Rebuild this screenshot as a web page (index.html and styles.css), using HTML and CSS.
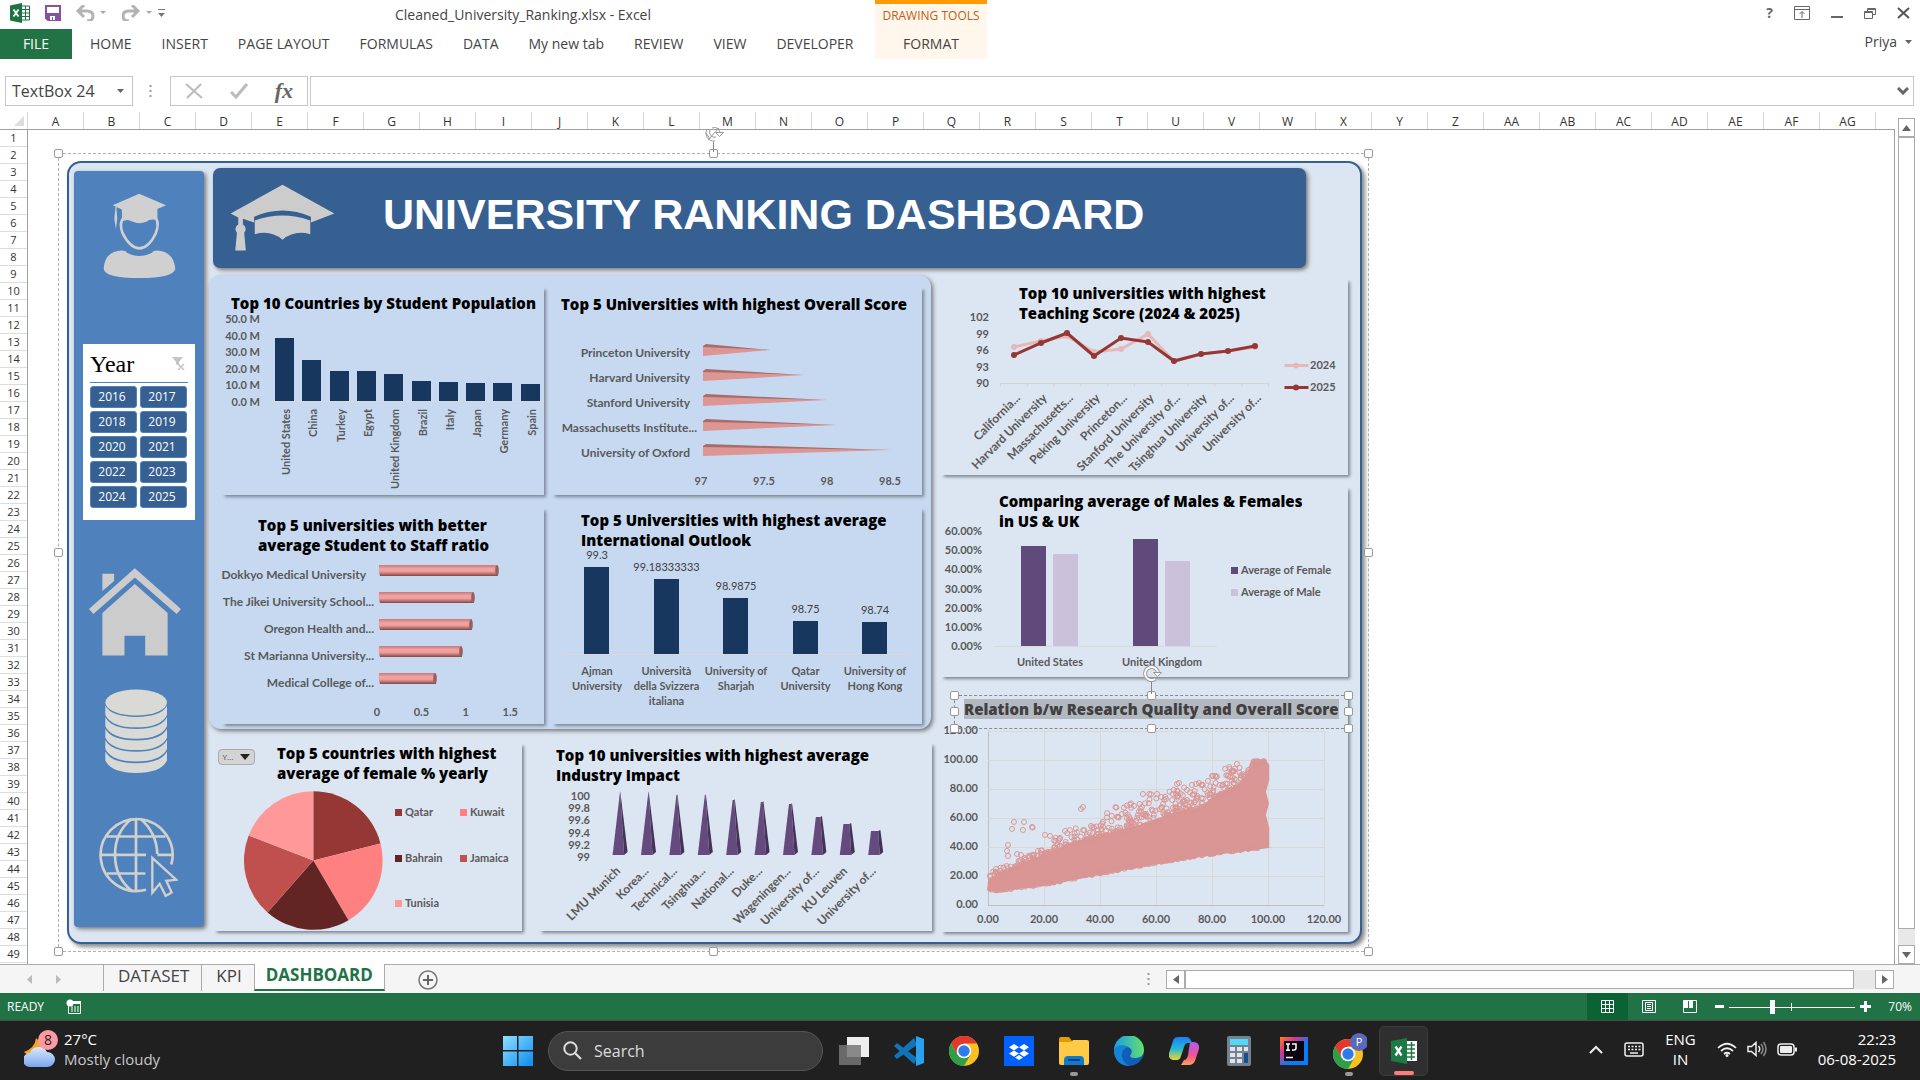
FILE: index.html
```html
<!DOCTYPE html>
<html lang="en">
<head>
<meta charset="utf-8">
<title>Cleaned_University_Ranking.xlsx - Excel</title>
<link rel="stylesheet" href="styles.css">
</head>
<body>
<header class="ribbon">
  <div class="quick">
    <svg width="20" height="20" viewBox="0 0 20 20"><path fill="#1f7244" d="M0 2.500 12 0v20L0 17.500z"/><path fill="none" stroke="#1f7244" d="M12 3h7.500v14H12M12 6.500h7M12 10h7M12 13.500h7M15.500 3v14"/><path stroke="#fff" stroke-width="1.800" d="m3.500 6.500 5 7m0-7-5 7"/></svg>
    <svg width="16" height="16" viewBox="0 0 16 16"><path fill="none" stroke="#8451a5" stroke-width="2" d="M1 1h14v14H3l-2-2z"/><path fill="#8451a5" d="M2 8h12v7H2z"/><path fill="#fff" d="M5 11h5v4H8v-3H7v3H5z"/></svg>
    <svg class="undo" width="31" height="16" viewBox="0 0 31 16"><path fill="none" stroke="#b3b3b3" stroke-width="3" d="M2 6h9q6 0 6 5t-6 5M8 0 2 6l6 6"/><path fill="#aaa" d="M24 6h6l-3 3z"/></svg>
    <svg width="31" height="16" viewBox="0 0 31 16"><path fill="none" stroke="#b3b3b3" stroke-width="3" d="M16 6H7q-6 0-6 5t6 5M10 0l6 6-6 6"/><path fill="#aaa" d="M24 6h6l-3 3z"/></svg>
    <svg width="7" height="8" viewBox="0 0 7 8"><path fill="#777" d="M0 0h7v1H0zM0 4h7L3.500 8z"/></svg>
  </div>
  <div class="doc-name">Cleaned_University_Ranking.xlsx - Excel</div>
  <div class="window-buttons">
    <button aria-label="Help"><b>?</b></button>
    <button aria-label="Ribbon options"><svg width="16" height="14" viewBox="0 0 16 14"><path fill="none" stroke="#666" d="M.5.5h15v13H.5zM.5 3.500h15M8 12V6M5.500 8 8 5.500 10.500 8"/></svg></button>
    <button aria-label="Minimize"><svg width="12" height="12"><path fill="#666" d="M0 9h12v2H0z"/></svg></button>
    <button aria-label="Restore"><svg width="12" height="12" viewBox="0 0 12 12"><path fill="none" stroke="#666" d="M.5 4.500h8v7h-8zM3.500 4V1.500h8v6H9M.5 5.500h8M3.500 2.500h8"/></svg></button>
    <button aria-label="Close"><svg width="13" height="12" viewBox="0 0 13 12"><path fill="none" stroke="#555" stroke-width="2" d="m1 1 11 10M12 1 1 11"/></svg></button>
  </div>
  <nav class="tabs">
    <button class="file">FILE</button><button>HOME</button><button>INSERT</button><button>PAGE LAYOUT</button><button>FORMULAS</button><button>DATA</button><button>My new tab</button><button>REVIEW</button><button>VIEW</button><button>DEVELOPER</button>
  </nav>
  <div class="context"><span>DRAWING TOOLS</span><button>FORMAT</button></div>
  <button class="user">Priya <svg width="7" height="4"><path fill="#666" d="M0 0h7L3.500 4z"/></svg></button>
</header>

<section class="formula">
  <div class="name-box"><input aria-label="Name box" value="TextBox 24"><svg width="7" height="4"><path fill="#666" d="M0 0h7L3.500 4z"/></svg></div>
  <svg class="grip" width="3" height="13"><path stroke="#999" stroke-width="2" stroke-dasharray="2 3" d="M1.500 0v13"/></svg>
  <div class="fx">
    <svg width="18" height="16" viewBox="0 0 18 16"><path stroke="#bbb" stroke-width="2" d="m1 1 16 14M16 1 2 15"/></svg>
    <svg width="18" height="16" viewBox="0 0 18 16"><path fill="none" stroke="#bbb" stroke-width="3" d="m1 9 5 5L17 1"/></svg>
    <i>fx</i>
  </div>
  <div class="formula-input"><input aria-label="Formula"><svg width="12" height="8" viewBox="0 0 12 8"><path fill="none" stroke="#666" stroke-width="3" d="m1 1 5 5 5-5"/></svg></div>
</section>

<main class="workspace">
  <div class="sheet">
    <div class="cols" id="cols"><span class="corner"><svg width="10" height="10"><path fill="#ddd" d="M10 0v10H0z"/></svg></span></div>
    <div class="grid">
      <div class="rows" id="rows"></div>
      <div class="canvas">
        <article class="dashboard">
          <aside class="side">
            <svg width="73" height="87" viewBox="190 188 220 260" fill="#d0d0d0"><path d="M192 418Q196 364 247 363q12 0 15 7 37 20 76 0 3-7 14-7 50 2 56 55-5 28-109 28T192 418z"/><path d="m219 227 80-35 81 35-26 11v34q-22-6-32 4-23 10-44 0-14-10-31 0v-36z"/><path fill="none" stroke="#d0d0d0" stroke-width="8" d="M249 268q-10 18 0 43 22 44 50 46 30-2 50-46 10-25 2-43"/><path d="M227 232h4v10l2 25-4 32-5-32 3-25z"/></svg>
            <section class="slicer">
              <header><h3>Year</h3><svg width="14" height="14" viewBox="0 0 14 14"><path fill="#c9c3c6" d="M1 0h11L8 5v4L5 7V5z"/><path stroke="#c9c3c6" stroke-width="1.500" d="m7 7 6 6m0-6-6 6"/></svg></header>
              <div class="years"><button>2016</button><button>2017</button><button>2018</button><button>2019</button><button>2020</button><button>2021</button><button>2022</button><button>2023</button><button>2024</button><button>2025</button></div>
            </section>
            <a class="home" href="#home" aria-label="Home"><svg width="92" height="88" viewBox="148 234 275 262" fill="#ccc"><path d="m285 234 138 122-13 15-125-109-124 109-13-15z"/><path d="M188 251h35v21l-35 30zM285 281l98 87v127h-67v-59h-62v59h-66V368z"/></svg></a>
            <a class="data" href="#data" aria-label="Data"><svg width="62" height="84" viewBox="194 597 185 250" fill="#d9dad5"><ellipse cx="287" cy="637" rx="92" ry="39"/><path d="M195 647q18 33 92 33t92-33v27q-18 37-92 37t-92-37z"/><path d="M195 681q18 35 92 35t92-35v27q-18 37-92 37t-92-37z"/><path d="M195 715q18 35 92 35t92-35v27q-18 37-92 37t-92-37z"/><path d="M195 749q18 35 92 35t92-35v27q-18 37-92 37t-92-37z"/><path d="M195 783q18 35 92 35t92-35v27q-18 37-92 37t-92-37z"/></svg></a>
            <a class="web" href="#web" aria-label="Web"><svg width="79" height="81" viewBox="177 980 237 242" fill="none" stroke="#d0d0cc" stroke-width="8"><path d="M318 1198A108 108 0 1 1 394 1122"/><path d="M288 984v218M181 1093h137M352 1093h44M200 1038h176M200 1149h116M275 985q-50 40-50 108t50 108M301 985q48 40 51 105"/><path stroke-width="7" d="m337 1102 72 66-30 3 16 35-18 10-18-36-22 27z"/></svg></a>
          </aside>
          <div class="board">
            <header class="banner">
              <svg width="105" height="68" viewBox="570 161 318 205" fill="#ccc"><path d="m572 250 157-87 157 87-71 27v-17q-86-38-172 0v17l-34-11v17a16 16 0 0 1 4 25l5 54h-32l5-54a16 16 0 0 1 4-25v-21z"/><path d="M645 271q84-30 168 0v42q-46-14-84 16-38-30-84-16z"/></svg>
              <h1>UNIVERSITY RANKING DASHBOARD</h1>
            </header>
            <div class="body">
              <div class="left">
                <div class="group">
                  <figure class="panel countries"><h2>Top 10 Countries by Student Population</h2><svg id="countries" viewBox="221 286 323 209"></svg></figure>
                  <figure class="panel overall"><h2>Top 5 Universities with highest Overall Score</h2><svg id="overall" viewBox="551 286 371 209"></svg></figure>
                  <figure class="panel staff"><h2>Top 5 universities with better<br>average Student to Staff ratio</h2><svg id="staff" viewBox="221 507 323 217"></svg></figure>
                  <figure class="panel outlook"><h2>Top 5 Universities with highest average<br>International Outlook</h2><svg id="outlook" viewBox="551 507 371 217"></svg></figure>
                </div>
                <div class="pair">
                  <figure class="panel female"><h2>Top 5 countries with highest<br>average of female % yearly</h2><svg id="female" viewBox="213 742 309 189"></svg><button class="field">Y... <svg width="10" height="6"><path fill="#222" d="M0 0h10L5 6z"/></svg></button></figure>
                  <figure class="panel industry"><h2>Top 10 universities with highest average<br>Industry Impact</h2><svg id="industry" viewBox="538 742 394 189"></svg></figure>
                </div>
              </div>
              <div class="right">
                <figure class="panel teaching"><h2>Top 10 universities with highest<br>Teaching Score (2024 &amp; 2025)</h2><svg id="teaching" viewBox="940 278 408 197"></svg></figure>
                <figure class="panel gender"><h2>Comparing average of Males &amp; Females<br>in US &amp; UK</h2><svg id="gender" viewBox="940 486 408 191"></svg></figure>
                <figure class="panel research"><svg id="research" viewBox="940 688 408 244"></svg>
                  <div class="textbox"><h2>Relation b/w Research Quality and Overall Score</h2>
                    <i class="h nw"></i><i class="h n"></i><i class="h ne"></i><i class="h w"></i><i class="h e"></i><i class="h sw"></i><i class="h s"></i><i class="h se"></i>
                    <svg class="turn" width="22" height="30" viewBox="0 0 22 30"><path stroke="#888" d="M10.500 18v12"/><path fill="none" stroke="#999" stroke-width="4" d="M14 15a6.500 6.500 0 1 1 3-6"/><path fill="none" stroke="#fff" stroke-width="2" d="M14 15a6.500 6.500 0 1 1 3-6"/><path fill="#fff" stroke="#999" d="M12.500 8.500h8l-4 4z"/></svg>
                  </div>
                </figure>
              </div>
            </div>
          </div>
          <div class="selection">
            <i class="h nw"></i><i class="h n"></i><i class="h ne"></i><i class="h w"></i><i class="h e"></i><i class="h sw"></i><i class="h s"></i><i class="h se"></i>
            <svg class="turn" width="22" height="30" viewBox="0 0 22 30"><path stroke="#888" d="M10.500 20v10"/><path fill="none" stroke="#999" d="M12 19A8 8 0 0 1 4 7M13 15A5 5 0 0 1 7 8M5 18 16 6M3 11l4 6M12.500 10.500h8l-4 4zM9 6q6-2 8 4"/></svg>
          </div>
        </article>
      </div>
    </div>
  </div>
  <div class="vscroll">
    <button aria-label="Scroll up"><svg width="9" height="6"><path fill="#666" d="M0 6h9L4.500 0z"/></svg></button>
    <div class="track"><div class="thumb"></div></div>
    <button aria-label="Scroll down"><svg width="9" height="6"><path fill="#666" d="M0 0h9L4.500 6z"/></svg></button>
  </div>
</main>

<footer class="sheetbar">
  <div class="steps"><svg width="5" height="9"><path fill="#bbb" d="M5 0v9L0 4.500z"/></svg><svg width="5" height="9"><path fill="#bbb" d="M0 0v9l5-4.500z"/></svg></div>
  <button>DATASET</button><button>KPI</button><button class="on">DASHBOARD</button>
  <button class="add" aria-label="New sheet"><svg width="20" height="20" viewBox="0 0 20 20"><circle cx="10" cy="10" r="9" fill="none" stroke="#777" stroke-width="1.500"/><path stroke="#666" stroke-width="2" d="M5 10h10M10 5v10"/></svg></button>
  <svg class="grip" width="3" height="13"><path stroke="#999" stroke-width="2" stroke-dasharray="2 3" d="M1.500 0v13"/></svg>
  <div class="hscroll">
    <button aria-label="Scroll left"><svg width="6" height="9"><path fill="#666" d="M6 0v9L0 4.500z"/></svg></button>
    <div class="track"><div class="thumb"></div></div>
    <button aria-label="Scroll right"><svg width="6" height="9"><path fill="#666" d="M0 0v9l6-4.500z"/></svg></button>
  </div>
</footer>
<div class="status">
  <span>READY</span>
  <svg width="16" height="16" viewBox="0 0 16 16"><path fill="none" stroke="#fff" d="M2.500 3.500h12v11h-12zM5 8h2m1 0h2m1 0h2M5 10h2m1 0h2m1 0h2M5 12h2m1 0h2m1 0h2"/><path fill="#fff" d="M6 2h9v3H6z"/><circle cx="4" cy="4" r="3.500" fill="#fff"/></svg>
  <div class="views">
    <button class="on" aria-label="Normal"><svg width="13" height="13" viewBox="0 0 13 13"><path fill="none" stroke="#fff" d="M.5.5h12v12H.5zM4.500 0v13M8.500 0v13M0 4.500h13M0 8.500h13"/></svg></button>
    <button aria-label="Page layout"><svg width="14" height="13" viewBox="0 0 14 13"><path fill="none" stroke="#fff" d="M.5.5h13v12H.5zM3.500 2.500h7v8h-7zM5 4.500h4M5 6.500h4M5 8.500h4"/></svg></button>
    <button aria-label="Page break"><svg width="14" height="13" viewBox="0 0 14 13"><path fill="none" stroke="#fff" d="M.5.5h13v12H.5z"/><path fill="#fff" d="M1 1h4v7H1zM6 1h4v7H6z"/></svg></button>
  </div>
  <div class="zoom">
    <svg width="9" height="3"><path fill="#fff" d="M0 0h9v3H0z"/></svg>
    <svg width="126" height="14" viewBox="0 0 126 14"><path stroke="#fff" d="M0 7.500h126M62.500 3v8"/><path fill="#fff" d="M41 0h5v14h-5z"/></svg>
    <svg width="11" height="11"><path fill="#fff" d="M0 4h4V0h3v4h4v3H7v4H4V7H0z"/></svg>
    <span>70%</span>
  </div>
</div>

<footer class="taskbar">
  <button class="weather">
    <svg width="36" height="38" viewBox="0 0 36 38"><defs><linearGradient id="cl" x2="0" y2="1"><stop stop-color="#dbe8fd"/><stop offset="1" stop-color="#7ba7ee"/></linearGradient></defs><path fill="#f5a623" d="M12 8q-1 10-12 14 6 6 14 3l6-9z"/><path fill="url(#cl)" d="M6 37a7 7 0 0 1 0-14 9 8 0 0 1 17-1 8 7.500 0 0 1 0 15z"/><circle cx="24" cy="10" r="10" fill="#ff99a4"/><text x="24" y="15" text-anchor="middle" class="badge">8</text></svg>
    <span><b>27°C</b><br>Mostly cloudy</span>
  </button>
  <div class="apps">
    <button aria-label="Start"><svg width="30" height="30" viewBox="0 0 30 30"><defs><linearGradient id="wn" x2="1" y2="1"><stop stop-color="#8fe0ff"/><stop offset="1" stop-color="#0a8bf0"/></linearGradient></defs><path fill="url(#wn)" d="M0 0h14v14H0zM15.500 0H30v14H15.500zM0 15.500h14V30H0zM15.500 15.500H30V30H15.500z"/></svg></button>
    <label class="search"><svg width="19" height="19" viewBox="0 0 19 19"><circle cx="7.500" cy="7.500" r="6.200" fill="none" stroke="#ddd" stroke-width="2"/><path stroke="#ddd" stroke-width="2.200" d="m12 12 6 6"/></svg><input placeholder="Search" aria-label="Search"></label>
    <button aria-label="Task view"><svg width="30" height="28" viewBox="0 0 30 28"><path fill="#eee" d="M8 0h22v20H8z"/><path fill="#777" fill-opacity=".85" d="M0 8h22v20H0z"/></svg></button>
    <button aria-label="Code"><svg width="30" height="30" viewBox="0 0 30 30"><path fill="#1173b8" d="m0 20 20-18 3 7L3 23zM0 10l3-3 20 15-3 6z"/><path fill="#2ba2ee" d="m22 0 8 3v24l-8 3z"/></svg></button>
    <button aria-label="Chrome"><svg width="30" height="30" viewBox="0 0 30 30"><g id="chrome"><circle cx="15" cy="15" r="15" fill="#fbc21f"/><path fill="#e2382d" d="M2 7.500a15 15 0 0 1 26 0H15L8.500 19z"/><path fill="#2f9e4b" d="M2 7.500A15 15 0 0 0 15 30l6.500-11.200-13 0z"/><circle cx="15" cy="15" r="7.300" fill="#fff"/><circle cx="15" cy="15" r="5.700" fill="#2f7bea"/></g></svg></button>
    <button aria-label="Dropbox"><svg width="30" height="30" viewBox="0 0 30 30"><path fill="#0061fe" d="M0 0h30v30H0z"/><path fill="#fff" d="m10 8 5 3.200-5 3.200-5-3.200zM20 8l5 3.200-5 3.200-5-3.200zM10 14.400l5 3.200-5 3.200-5-3.200zM20 14.400l5 3.200-5 3.200-5-3.200zM15 19l4 2.500-4 2.500-4-2.500z"/></svg></button>
    <button class="running" aria-label="Files"><svg width="30" height="28" viewBox="0 0 30 28"><path fill="#e39c00" d="M0 2q0-2 2-2h8l3 4v8H0z"/><path fill="#fdcb45" d="M0 5 12 5l2-2h14q2 0 2 2v21q0 2-2 2H2q-2 0-2-2z"/><path fill="#0f79cf" d="M5 28v-5q0-4 4-4h12q4 0 4 4v5z"/><path fill="#063f75" d="M9 22h12v2H9z"/></svg></button>
    <button aria-label="Edge"><svg width="30" height="30" viewBox="0 0 30 30"><defs><linearGradient id="ed" x2="1"><stop stop-color="#1b9de2"/><stop offset="1" stop-color="#63e06c"/></linearGradient></defs><circle cx="15" cy="15" r="15" fill="#0f5fb8"/><path fill="url(#ed)" d="M0 14a15 15 0 0 1 30 0q0 7-8 8-8 0-5-4 2-3-1-6-6-4-12 0-3 2-4 2z"/><path fill="#1583d6" d="M0 14q5-8 14-3-7 2-6 10 2 7 8 9A15 15 0 0 1 0 14z"/></svg></button>
    <button aria-label="Copilot"><svg width="30" height="28" viewBox="0 0 30 28"><defs><linearGradient id="c1" x2="0" y2="1"><stop stop-color="#1d7ff2"/><stop offset=".5" stop-color="#24b8d8"/><stop offset="1" stop-color="#f0d52b"/></linearGradient><linearGradient id="c2" x2="0" y2="1"><stop stop-color="#b05df0"/><stop offset=".6" stop-color="#f2558d"/><stop offset="1" stop-color="#fda05a"/></linearGradient></defs><path fill="url(#c2)" d="M21 5h4q6 1 5 7l-4 12q-2 4-6 4h-8l3-5q3 0 4-5z"/><path fill="url(#c1)" d="M9 0h9q3 0 5 6h-4q-3 0-4 4l-3 9q-1 4-4 4H4q-5-1-4-7L4 4q1-4 5-4z"/></svg></button>
    <button aria-label="Calculator"><svg width="24" height="30" viewBox="0 0 24 30"><rect width="24" height="30" rx="2" fill="#77828f"/><path fill="#4fd8f7" d="M3 3h18v6H3z"/><path fill="#dfe5ec" d="M3 11h5v4H3zM10 11h5v4h-5zM17 11h4v4h-4zM3 17h5v4H3zM10 17h5v4h-5zM3 23h5v4H3zM10 23h5v4h-5z"/><path fill="#164f92" d="M17 17h4v10h-4z"/></svg></button>
    <button aria-label="IntelliJ"><svg width="28" height="28" viewBox="0 0 28 28"><defs><linearGradient id="ij" x2="1" y2="1"><stop stop-color="#fc801d"/><stop offset=".3" stop-color="#d6368c"/><stop offset=".6" stop-color="#087cfa"/></linearGradient></defs><path fill="url(#ij)" d="M0 0h28v28H0z"/><path fill="#0b0310" d="M4 4h20v20H4z"/><path stroke="#fff" stroke-width="1.500" fill="none" d="M6 7h4M8 7v6M6 13.200h4M12 7h4v4q0 2-2 2h-2M6 20.500h7"/></svg></button>
    <button class="running" aria-label="Chrome profile"><svg width="36" height="36" viewBox="0 0 36 36"><use href="#chrome" x="2" y="6"/><circle cx="28" cy="9" r="9" fill="#5b69bc"/><text x="28" y="13" text-anchor="middle" class="profile">P</text></svg></button>
    <button class="active" aria-label="Excel"><svg width="26" height="26" viewBox="0 0 26 26"><path fill="#fff" d="M15 3h11v20H15z"/><path fill="#1d7a45" d="M0 3 16 0v26L0 23z"/><path stroke="#1d7a45" stroke-width="1.500" d="M16 7h8M16 11h8M16 15h8M16 19h8M20.500 4v18"/><path stroke="#fff" stroke-width="2.300" d="m4.500 8.500 6 9m0-9-6 9"/></svg></button>
  </div>
  <div class="tray">
    <svg width="14" height="9"><path fill="none" stroke="#eee" stroke-width="2" d="m1 8 6-6 6 6"/></svg>
    <svg width="20" height="15" viewBox="0 0 20 15"><rect x="1" y="1" width="18" height="13" rx="2" fill="none" stroke="#eee" stroke-width="1.500"/><path stroke="#eee" stroke-width="1.600" stroke-dasharray="2 1.500" d="M4 4.500h13M4 7.500h13"/><path stroke="#eee" stroke-width="1.500" d="M6 11h8"/></svg>
    <span class="lang">ENG<br>IN</span>
    <div class="net">
      <svg width="20" height="15" viewBox="0 0 20 15"><path fill="none" stroke="#eee" stroke-width="1.700" d="M1 6q9-8.500 18 0M4 9q6-5.500 12 0M7 12q3-2.500 6 0"/><circle cx="10" cy="13.500" r="1.500" fill="#eee"/></svg>
      <svg width="20" height="16" viewBox="0 0 20 16"><path fill="none" stroke="#eee" stroke-width="1.500" d="M1 5.500h3.500L9 1.500v13l-4.500-4H1zM11.500 5q2.500 3 0 6"/><path fill="none" stroke="#888" stroke-width="1.500" d="M14 3q4 5 0 10M16.500 1q5 7 0 14"/></svg>
      <svg width="20" height="13" viewBox="0 0 20 13"><rect x="1" y="1" width="16" height="11" rx="3" fill="none" stroke="#eee" stroke-width="1.500"/><rect x="3" y="3" width="12" height="7" rx="1" fill="#eee"/><path stroke="#eee" stroke-width="2" d="M19 4.500v4"/></svg>
    </div>
    <span class="clock">22:23<br>06-08-2025</span>
  </div>
</footer>
<script src="script.js"></script>
</body>
</html>
```
FILE: styles.css
```css
* { box-sizing: border-box; }
body { margin: 0; min-height: 100vh; display: flex; flex-direction: column; background: #fff; color: #444; font: 14px/18px "Open Sans", "Noto Sans", sans-serif; overflow-x: hidden; }
button { border: 0; padding: 0; background: none; font: inherit; color: inherit; }
input { border: 0; padding: 0; background: none; font: inherit; color: inherit; min-width: 0; outline: 0; }
h1, h2, h3, figure { margin: 0; }
svg { display: block; flex: none; }

.ribbon { display: grid; grid-template-columns: 875px 112px 1fr; grid-template-rows: 29px 30px; }
.quick { grid-area: 1 / 1; display: flex; align-items: center; gap: 15px; padding: 0 0 3px 10px; }
.quick svg:last-child { margin-left: -10px; }
.doc-name { grid-area: 1 / 1; align-self: center; padding-left: 395px; color: #444; }
.tabs { grid-area: 2 / 1; display: flex; gap: 30px; }
.file { background: #217346; color: #fff; width: 72px; margin-right: -12px; }
.context { grid-area: 1 / 2 / 3 / 3; display: grid; grid-template-rows: 25px 30px; background: #fff7eb; border-top: 4px solid #ff9b00; text-align: center; }
.context span { color: #c55a11; font-size: 12px; line-height: 24px; }
.window-buttons { grid-area: 1 / 3; display: flex; justify-content: flex-end; align-items: center; gap: 21px; padding: 0 10px 3px 0; color: #666; }
.user { grid-area: 2 / 3; justify-self: end; display: flex; align-items: center; gap: 8px; padding: 0 8px 4px 0; }

.formula { display: flex; align-items: center; padding: 17px 6px 0 5px; color: #444; }
.name-box, .fx, .formula-input { height: 30px; border: 1px solid #c6c6c6; display: flex; align-items: center; }
.name-box { width: 128px; padding: 0 6px; font-size: 16px; }
.name-box input { width: 105px; }
.formula .grip { margin: 0 18px 0 16px; }
.fx { width: 138px; padding: 0 14px; justify-content: space-between; margin-right: 2px; }
.fx i { font: italic bold 22px/26px "Liberation Serif", serif; color: #666; }
.formula-input { flex: 1; padding-right: 4px; }
.formula-input input { flex: 1; }

.workspace { display: flex; margin-top: 6px; flex: 1; }
.sheet { flex: 1; min-width: 0; display: flex; flex-direction: column; }
.cols { display: flex; height: 18px; padding-left: 1px; border-bottom: 1px solid #a0a0a0; font-size: 12px; line-height: 20px; color: #333; }
.cols span { flex: 0 0 56px; text-align: center; border-right: 1px solid #d8d8d8; }
.cols .corner { flex-basis: 27px; display: flex; justify-content: flex-end; align-items: flex-end; padding: 0 3px 3px 0; }
.grid { flex: 1; display: flex; border-right: 1px solid #a0a0a0; }
.rows { width: 28px; border-right: 1px solid #a0a0a0; font-size: 11px; line-height: 16px; text-align: center; color: #333; }
.rows div { height: 17px; border-bottom: 1px solid #ddd; }
.canvas { flex: 1; min-width: 0; display: flex; }
.vscroll { width: 25px; padding: 6px 5px 0 3px; display: flex; flex-direction: column; background: #fff; }
.vscroll button, .hscroll button { display: flex; align-items: center; justify-content: center; border: 1px solid #ababab; background: #fff; }
.vscroll button { height: 19px; }
.vscroll .track { flex: 1; background: #e8e8e8; padding-bottom: 16px; display: flex; }
.thumb { flex: 1; background: #fff; border: 1px solid #ababab; }

.dashboard { position: relative; flex: 1; min-width: 0; margin: 31px 532px 20px 39px; padding: 5px 12px 9px 5px; border: 2px solid #366092; border-radius: 14px; background: #dce6f2; box-shadow: 3px 3px 4px #888; display: flex; gap: 5px; }
.side { width: 130px; margin: 3px 0 6px; padding-top: 21px; background: #4f81bd; border-radius: 4px; box-shadow: 2px 2px 4px #777; display: flex; flex-direction: column; align-items: center; }
.slicer { width: 112px; height: 176px; margin-top: 65px; background: #fff; padding: 6px 7px; }
.slicer header { display: flex; justify-content: space-between; align-items: center; height: 33px; border-bottom: 1px solid #4f81bd; padding: 0 3px 4px 0; }
.slicer h3 { font: 24px/28px "Liberation Serif", serif; color: #000; }
.years { display: grid; grid-template-columns: 47px 47px; gap: 3px; margin-top: 3px; }
.years button { height: 22px; background: #366092; color: #fff; font-size: 12px; line-height: 20px; border: 1px solid #4f81bd; border-radius: 3px; padding-right: 3px; }
.home { margin: 48px 8px 0 0; }
.data { margin: 33px 7px 0 0; }
.web { margin: 44px 2px 0 0; }
.board { flex: 1; min-width: 0; }
.banner { height: 100px; margin: 0 42px 0 4px; padding-left: 17px; background: #366092; border-radius: 7px; box-shadow: 2px 2px 4px #777; display: flex; align-items: center; gap: 48px; color: #fff; }
h1 { font: bold 43px/50px "Liberation Sans", sans-serif; white-space: nowrap; padding-bottom: 8px; }
.body { display: grid; grid-template-columns: 723fr 408fr; gap: 8px; margin-top: 7px; }
.left { display: flex; flex-direction: column; gap: 13px; }
.group { display: grid; grid-template-columns: 323fr 371fr; gap: 12px 7px; margin-right: 1px; padding: 11px 9px 5px 12px; background: #c6d9f1; border-radius: 12px; box-shadow: 2px 2px 4px #777; }
.pair { display: grid; grid-template-columns: 309fr 394fr; gap: 16px; margin-left: 4px; }
.right { display: flex; flex-direction: column; gap: 11px; padding-top: 3px; }
.panel { display: grid; position: relative; box-shadow: 3px 3px 3px -1px #7d8794; background: #dce6f2; }
.group .panel { background: #c6d9f1; }
.panel > svg { grid-area: 1 / 1; width: 100%; height: auto; }
h2 { grid-area: 1 / 1; font: 800 15px/20px "Open Sans", sans-serif; color: #000; white-space: nowrap; }
.countries h2 { padding: 7px 0 0 10px; }
.overall h2 { padding: 8px 0 0 10px; }
.staff h2 { padding: 8px 0 0 37px; }
.outlook h2 { padding: 3px 0 0 30px; }
.female h2 { padding: 1px 0 0 64px; }
.industry h2 { padding: 3px 0 0 18px; }
.teaching h2 { padding: 5px 0 0 79px; }
.gender h2 { padding: 5px 0 0 59px; }
.panel text { font: bold 11px Lato, sans-serif; fill: #595959; }
.panel text.plain { font-weight: 400; fill: #404040; }
.panel text.large { font-size: 12px; }
.field { position: absolute; left: 5px; top: 7px; width: 37px; height: 16px; border: 1px solid #aaa; border-radius: 4px; background: #d4d4d4; font-size: 8px; line-height: 14px; display: flex; align-items: center; justify-content: space-around; }
.textbox { position: absolute; left: 14px; right: -1px; top: 7px; height: 34px; border: 1px dashed #888; padding: 3px 9px; }
.textbox h2 { background: #b4b9c0; color: #404040; }
.selection { position: absolute; inset: -10px -9px -10px -11px; border: 1px dashed #b0b0b0; pointer-events: none; }
.h { position: absolute; width: 9px; height: 9px; background: #fff; border: 1px solid #999; border-radius: 2px; }
.nw, .w, .sw { left: -5px; }
.ne, .e, .se { right: -5px; }
.n, .s { left: calc(50% - 5px); }
.nw, .n, .ne { top: -5px; }
.sw, .s, .se { bottom: -5px; }
.w, .e { top: calc(50% - 5px); }
.turn { position: absolute; left: calc(50% - 11px); top: -32px; }

.sheetbar { display: flex; height: 29px; background: #f5f5f5; border-top: 1px solid #ababab; font-size: 17px; line-height: 22px; padding-right: 26px; align-items: center; }
.steps { display: flex; gap: 24px; width: 103px; padding-left: 27px; }
.sheetbar > button { align-self: flex-start; height: 26px; border-left: 1px solid #ababab; padding: 0 12px 5px 14px; }
.sheetbar .on { margin-top: -1px; height: 27px; background: #fff; color: #217346; font-weight: 700; border-right: 1px solid #ababab; border-bottom: 2px solid #217346; padding: 0 11px 3px; }
.sheetbar .add { border: 0; align-self: center; height: 22px; padding: 2px 0 0 33px; }
.sheetbar .grip { margin-left: auto; margin-right: 16px; }
.hscroll { display: flex; width: 728px; height: 19px; }
.hscroll button { width: 19px; }
.hscroll .track { flex: 1; display: flex; background: #e8e8e8; padding-right: 21px; }

.status { height: 28px; background: #217346; color: #fff; font-size: 12px; display: flex; align-items: center; gap: 22px; padding: 0 8px 0 7px; border-bottom: 1px solid #4a4a4a; }
.views { margin-left: auto; display: flex; align-self: stretch; }
.views button { width: 41px; display: grid; place-items: center; }
.views .on { background: #0b6233; }
.zoom { display: flex; align-items: center; gap: 5px; margin-left: -17px; }
.zoom span { padding-left: 12px; }

.taskbar { height: 59px; background: #202020; color: #fff; font-size: 15px; line-height: 20px; display: grid; grid-template-columns: 1fr auto 1fr; align-items: center; }
.weather { display: flex; align-items: center; gap: 4px; text-align: left; padding: 0 0 3px 24px; color: #c8c8c8; }
.weather b { font-weight: 400; color: #fff; }
.badge { font-size: 14px; fill: #222; }
.profile { font-size: 11px; fill: #fff; }
.apps { display: flex; align-items: center; height: 59px; margin-right: 2px; }
.apps button { width: 55px; height: 50px; display: grid; place-items: center; position: relative; }
.apps .active { width: 49px; background: #2f2f2f; border: 1px solid #3c3c3c; border-radius: 5px; margin-left: 3px; }
.running::after, .active::after { content: ""; position: absolute; bottom: 0; left: 50%; width: 8px; height: 4px; margin-left: -4px; border-radius: 2px; background: #999; }
.active::after { width: 20px; margin-left: -10px; background: #ff7c78; }
.search { display: flex; align-items: center; gap: 12px; width: 275px; height: 40px; border-radius: 20px; border: 1px solid #555; background: #3c3c3c; padding: 0 14px; font-size: 16px; margin: 0 3px; }
.search input { flex: 1; }
.search input::placeholder { color: #ddd; opacity: 1; }
.tray { justify-self: end; display: flex; align-items: center; gap: 21px; padding: 0 24px 3px 0; }
.net { display: flex; align-items: center; gap: 10px; }
.lang { text-align: center; }
.clock { text-align: right; }
```
FILE: script.js
```js
(() => {
const NS = "http://www.w3.org/2000/svg";
const $ = (id) => document.getElementById(id);

function shape(parent, name, attrs, text) {
  const node = document.createElementNS(NS, name);
  for (const key in attrs) node.setAttribute(key, attrs[key]);
  if (text !== undefined) node.textContent = text;
  parent.appendChild(node);
  return node;
}
const path = (p, d, fill) => shape(p, "path", { d, fill });
const line = (p, d, stroke, width = 1) => shape(p, "path", { d, stroke, fill: "none", "stroke-width": width });
const rect = (p, x, y, width, height, fill) => shape(p, "rect", { x, y, width, height, fill });
// y is the vertical middle of the label
function label(p, x, y, text, anchor = "middle", turn = 0, cls = "") {
  shape(p, "text", { x, y: y + 4, "text-anchor": anchor, class: cls, transform: turn ? `rotate(${turn} ${x} ${y})` : "" }, text);
}

// sheet headings
for (let i = 0; i < 33; i++) {
  const cell = document.createElement("span");
  cell.textContent = (i > 25 ? "A" : "") + String.fromCharCode(65 + (i % 26));
  $("cols").appendChild(cell);
}
for (let i = 1; i < 50; i++) {
  const cell = document.createElement("div");
  cell.textContent = i;
  $("rows").appendChild(cell);
}

// student population
let s = $("countries");
["50.0 M", "40.0 M", "30.0 M", "20.0 M", "10.0 M", "0.0 M"].forEach((t, i) => label(s, 260, 319 + i * 16.5, t, "end"));
line(s, "M272 401.500H544", "#d9d9d9");
[["United States", 338], ["China", 360], ["Turkey", 371], ["Egypt", 371], ["United Kingdom", 374], ["Brazil", 381], ["Italy", 382], ["Japan", 383], ["Germany", 383], ["Spain", 384]].forEach(([t, top], i) => {
  const x = 275 + Math.round(i * 27.3);
  rect(s, x, top, 19, 401 - top, "#17375e");
  label(s, x + 11, 409, t, "end", -90);
});

// overall score cones
s = $("overall");
[["Princeton University", 770], ["Harvard University", 804], ["Stanford University", 827], ["Massachusetts Institute...", 837], ["University of Oxford", 891]].forEach(([t, tip], i) => {
  const y = 344 + i * 25;
  path(s, `M703 ${y + 2}L${tip} ${y + 6}L703 ${y + 12}Z`, "#dd9694");
  path(s, `M703 ${y + 2}L706 ${y}L${tip} ${y + 6}L703 ${y + 3}Z`, "#a86c6b");
  label(s, i === 3 ? 697 : 690, y + 9, t, "end", 0, "large");
});
["97", "97.5", "98", "98.5"].forEach((t, i) => label(s, 701 + i * 63, 481, t));

// student to staff cylinders
s = $("staff");
const grad = shape(shape(s, "defs", {}), "linearGradient", { id: "tube", x2: 0, y2: 1 });
[["0", "#c47b79"], [".35", "#f2a5a3"], [".6", "#ee9c9a"], ["1", "#7d4745"]].forEach(([offset, color]) => shape(grad, "stop", { offset, "stop-color": color }));
[["Dokkyo Medical University", 499], ["The Jikei University School...", 475], ["Oregon Health and...", 473], ["St Marianna University...", 463], ["Medical College of...", 437]].forEach(([t, end], i) => {
  const y = 565 + i * 27;
  path(s, `M379 ${y}H${end - 1}V${y + 11}H380Q378 ${y + 6} 379 ${y}Z`, "url(#tube)");
  shape(s, "ellipse", { cx: end - 2, cy: y + 5.5, rx: 1.8, ry: 5, fill: "#96605f" });
  label(s, i ? 374 : 366, y + 10, t, "end", 0, "large");
});
["0", "0.5", "1", "1.5"].forEach((t, i) => label(s, 377 + i * 44.4, 712, t));

// international outlook
s = $("outlook");
line(s, "M562 654.500H910", "#d9d9d9");
[["99.3", 567, ["Ajman", "University"]], ["99.18333333", 579, ["Università", "della Svizzera", "italiana"]], ["98.9875", 598, ["University of", "Sharjah"]], ["98.75", 621, ["Qatar", "University"]], ["98.74", 622, ["University of", "Hong Kong"]]].forEach(([v, top, names], i) => {
  const x = 597 + i * 69.5;
  rect(s, Math.round(x - 13), top, 25, 654 - top, "#17375e");
  label(s, x, top - 12, v, "middle", 0, "plain");
  names.forEach((t, k) => label(s, x, 671 + k * 15, t));
});

// female share pie
s = $("female");
const stops = [0, 75.7, 149.5, 221.3, 291.1, 360];
["#943735", "#ff8080", "#632523", "#c0504d", "#ff9999"].forEach((fill, i) => {
  const at = (deg) => [313.3 + 69.3 * Math.sin(deg * Math.PI / 180), 860.5 - 69.3 * Math.cos(deg * Math.PI / 180)].join(" ");
  path(s, `M313.300 860.500L${at(stops[i])}A69.300 69.300 0 0 1 ${at(stops[i + 1])}Z`, fill);
});
[["Qatar", 395, 812, "#943735"], ["Kuwait", 460, 812, "#ff8080"], ["Bahrain", 395, 858, "#632523"], ["Jamaica", 460, 858, "#c0504d"], ["Tunisia", 395, 903, "#ff9999"]].forEach(([t, x, y, fill]) => {
  rect(s, x, y - 3, 7, 7, fill);
  label(s, x + 10, y, t, "start");
});

// industry impact pyramids
s = $("industry");
["100", "99.8", "99.6", "99.4", "99.2", "99"].forEach((t, i) => label(s, 590, 796 + i * 12.2, t, "end"));
[["LMU Munich", 792], ["Korea...", 792], ["Technical...", 795], ["Tsinghua...", 795], ["National...", 800], ["Duke...", 802], ["Wageningen...", 804], ["University of...", 817], ["KU Leuven", 824], ["University of...", 831]].forEach(([t, top], i) => {
  const x = 612.6 + i * 28.4, f = (855 - top) / 64, apex = x + 7.5;
  const l = x + 7.5 * f, r = x + 11.5 - 4 * f, b = x + 15 - 7.5 * f;
  path(s, `M${x} 855L${l} ${top}H${r}L${x + 11.5} 855Z`, "#654b7d");
  path(s, `M${x + 11.5} 855L${r} ${top}L${b} ${top - 1}L${x + 15} 852Z`, "#453257");
  label(s, apex - 2, 869, t, "end", -45, "large");
});

// teaching score lines
s = $("teaching");
["102", "99", "96", "93", "90"].forEach((t, i) => label(s, 989, 317 + i * 16.6, t, "end"));
line(s, "M1000 383.500H1268.500" + [...Array(11)].map((_, i) => `M${1000.5 + i * 26.8} 383v4`).join(""), "#d4d4d4");
const xs = [1014, 1041, 1067, 1094, 1121, 1148, 1174, 1201, 1228, 1255];
[["2024", "#e6b9b8", [347, 341, 336, 352, 349, 334, 361, 354, 351, 347], 365], ["2025", "#953735", [355, 343, 333, 356, 338, 342, 361, 354, 351, 346], 387]].forEach(([t, color, ys, ly]) => {
  line(s, "M" + xs.map((x, i) => x + " " + ys[i]).join("L"), color, 3);
  xs.forEach((cx, i) => shape(s, "circle", { cx, cy: ys[i], r: 3, fill: color }));
  line(s, `M1284.500 ${ly}.500h24`, color, 3);
  shape(s, "circle", { cx: 1296, cy: ly + 0.5, r: 3, fill: color });
  label(s, 1310, ly, t, "start");
});
["California...", "Harvard University", "Massachusetts...", "Peking University", "Princeton...", "Stanford University", "The University of...", "Tsinghua University", "University of...", "University of..."].forEach((t, i) => label(s, xs[i] + 4, 396, t, "end", -45, "large"));

// males and females
s = $("gender");
["60.00%", "50.00%", "40.00%", "30.00%", "20.00%", "10.00%", "0.00%"].forEach((t, i) => label(s, 982, 531 + i * 19.2, t, "end"));
line(s, "M994 646.500H1217", "#d9d9d9");
[[1021, 546, "#604a7b"], [1053, 554, "#ccc1da"], [1133, 539, "#604a7b"], [1165, 561, "#ccc1da"]].forEach(([x, y, c]) => rect(s, x, y, 25, 646 - y, c));
label(s, 1050, 662, "United States");
label(s, 1162, 662, "United Kingdom");
rect(s, 1231, 567, 7, 7, "#604a7b");
label(s, 1241, 570, "Average of Female", "start");
rect(s, 1231, 589, 7, 7, "#ccc1da");
label(s, 1241, 592, "Average of Male", "start");

// research quality scatter
s = $("research");
for (let i = 0; i < 7; i++) {
  label(s, 978, 904 - i * 29, (i * 20).toFixed(2), "end");
  label(s, 988 + i * 56, 919, (i * 20).toFixed(2));
  line(s, `M${988.5 + i * 56} 730V905M988 ${905.5 - i * 29}H1324`, i ? "#d9d9d9" : "#bfbfbf");
}
const dots = shape(s, "g", { transform: "translate(920 470) scale(.3333)" });
const upper = [[203, 1238], [215, 1225], [260, 1200], [330, 1172], [400, 1142], [460, 1115], [540, 1096], [620, 1076], [700, 1052], [760, 1030], [840, 1012], [900, 970], [960, 940], [1000, 890], [1034, 866]];
const lower = [[203, 1262], [230, 1267], [400, 1243], [550, 1213], [700, 1184], [860, 1158], [1048, 1134]];
const rightSide = [[1048, 885], [1048, 930], [1038, 965], [1047, 1000], [1038, 1035], [1048, 1075]];
path(dots, "M" + [...upper, ...rightSide, ...[...lower].reverse()].map((p) => p.join(" ")).join("L") + "Z", "#d99694");
let seed = 7;
const random = () => (seed = (seed * 16807) % 2147483647) / 2147483647;
const ring = (cx, cy) => shape(dots, "circle", { cx, cy, r: 7.5, fill: "none", stroke: "#d99694", "stroke-width": 3 });
const edge = (points, x) => {
  for (let i = 1; i < points.length; i++) {
    const [a, b] = [points[i - 1], points[i]];
    if (x <= b[0]) return a[1] + (b[1] - a[1]) * (x - a[0]) / (b[0] - a[0]);
  }
  return points[points.length - 1][1];
};
for (let i = 0; i < 520; i++) {
  const x = 210 + random() * 825;
  const spread = x < 400 ? 26 : x < 560 ? 48 : x < 960 ? 82 : 30;
  ring(x, Math.max(874, edge(upper, x) + 8 - Math.pow(random(), 2.6) * spread));
  if (i % 4 === 0) ring(x, edge(lower, x) - 8 + random() * 4);
}
[[282, 1056], [276, 1077], [312, 1056], [309, 1080], [336, 1071], [338, 1073], [264, 1125], [261, 1143], [264, 1158], [291, 1152], [303, 1155], [327, 1157], [354, 1143], [306, 1180], [228, 1197], [375, 1095], [390, 1098], [420, 1104], [435, 1083], [403, 1131], [483, 1017], [489, 1011], [513, 1068], [522, 1073], [471, 1087], [594, 1041], [606, 1032], [642, 1008], [666, 1011], [669, 972], [688, 972], [693, 973], [711, 972], [768, 972], [771, 942], [777, 939], [801, 960], [816, 945], [828, 942], [837, 939], [848, 945], [864, 933], [879, 918], [888, 921], [887, 939], [930, 921], [937, 903], [942, 903], [936, 932], [963, 915], [985, 900], [1008, 881], [824, 963], [738, 987], [724, 981]].forEach((p) => ring(p[0], p[1]));
})();
```
